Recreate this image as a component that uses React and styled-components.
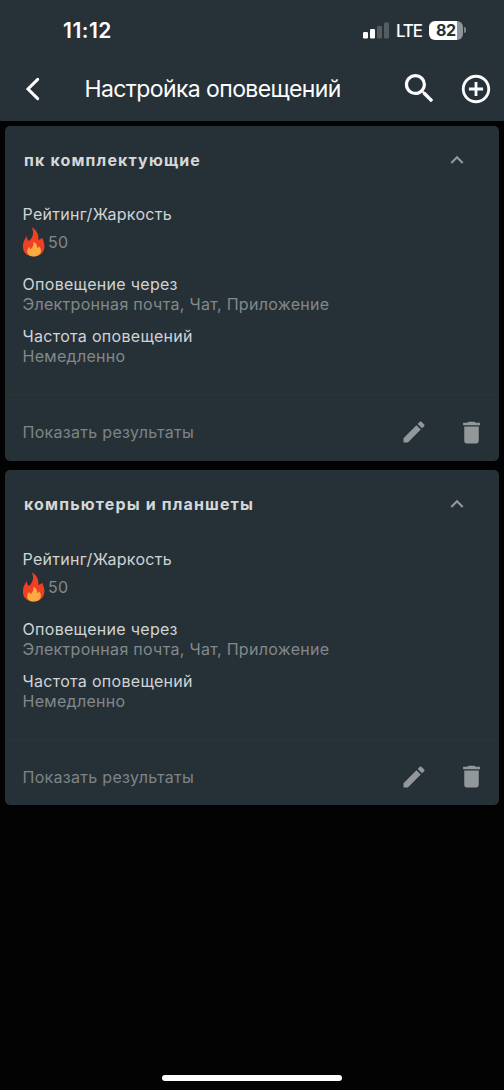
import React from 'react';
import styled, { createGlobalStyle } from 'styled-components';
import {
  MdSearch,
  MdAddCircleOutline,
  MdExpandLess,
  MdEdit,
  MdDelete
} from 'react-icons/md';

const GlobalStyle = createGlobalStyle`
  * {
    box-sizing: border-box;
  }

  body {
    margin: 0;
    background: #030303;
    font-family: Inter, 'Liberation Sans', sans-serif;
    -webkit-font-smoothing: antialiased;
  }
`;

const Screen = styled.div`
  display: flex;
  flex-direction: column;
  width: 504px;
  height: 1090px;
  overflow: hidden;
  background: #030303;
`;

const Header = styled.header`
  flex-shrink: 0;
  height: 121px;
  background: #273238;
  color: #fdfdfd;
`;

const StatusBar = styled.div`
  display: flex;
  align-items: center;
  height: 60px;
  padding: 0 38px 0 63px;
`;

const Time = styled.span`
  flex: 1;
  padding-top: 1px;
  font-size: 21px;
  font-weight: 600;
  line-height: 24px;
  letter-spacing: 0.5px;
`;

const Signal = styled.svg`
  display: block;
  margin-right: 7px;
`;

const Network = styled.span`
  width: 26px;
  margin-right: 7px;
  padding-top: 1px;
  font-size: 17px;
  font-weight: 500;
  line-height: 22px;
  letter-spacing: -1.2px;
  white-space: nowrap;
`;

const Battery = styled.div`
  width: 34px;
  height: 19px;
  border-radius: 6px;
  background: linear-gradient(to right, #fff 82%, #8f9598 82%);
  color: #273238;
  font-size: 16px;
  font-weight: 700;
  line-height: 19px;
  letter-spacing: -0.3px;
  padding-left: 7px;
`;

const BatteryTip = styled.div`
  width: 2px;
  height: 6px;
  margin-left: 1px;
  border-radius: 0 2px 2px 0;
  background: #7f868a;
`;

const NavBar = styled.nav`
  display: flex;
  align-items: center;
  height: 57px;
  padding: 0 11px 0 25px;
`;

const Title = styled.h1`
  flex: 1;
  margin: 0 0 0 43.5px;
  font-size: 23px;
  font-weight: 400;
  line-height: 30px;
  letter-spacing: -0.6px;
  white-space: nowrap;
`;

const IconButton = styled.button`
  display: flex;
  margin: 0 0 0 ${({ $gap }) => $gap || 0}px;
  padding: 0;
  border: none;
  background: none;
  color: inherit;
`;

const List = styled.main`
  display: flex;
  flex-direction: column;
  gap: 9.5px;
  padding: 5px 5px 0;
`;

const Card = styled.section`
  height: 334.9px;
  border-radius: 5px;
  background: #263137;
`;

const CardHeader = styled.div`
  display: flex;
  align-items: center;
  justify-content: space-between;
  height: 68px;
  padding: 0 29px 0 19px;
  color: #929799;
`;

const CardTitle = styled.h2`
  margin: 0;
  color: #d5d7d8;
  font-size: 16px;
  font-weight: 700;
  line-height: 20px;
  letter-spacing: 1.15px;
`;

const CardBody = styled.div`
  height: 200.4px;
  padding: 10.4px 17.5px 0;
`;

const Field = styled.div`
  margin-bottom: ${({ $space }) => $space || 0}px;
  font-size: 16px;
  line-height: 20px;
  letter-spacing: 0.3px;
`;

const Label = styled.div`
  color: #d1d3d4;
`;

const Value = styled.div`
  color: #82888b;
`;

const Rating = styled.div`
  display: flex;
  align-items: center;
  height: 36px;
  gap: 3.5px;
  color: #82888b;
`;

const CardFooter = styled.div`
  display: flex;
  align-items: center;
  height: 66px;
  padding: 9px 13px 0 17.5px;
  border-top: 1px solid #2a353a;
  color: #929799;
`;

const ResultsLink = styled.span`
  flex: 1;
  color: #7d8487;
  font-size: 16px;
  line-height: 20px;
  letter-spacing: 0.3px;
`;

const HomeIndicator = styled.div`
  width: 180px;
  height: 6px;
  margin: auto auto 9.5px;
  border-radius: 3px;
  background: #fff;
`;

const Flame = () => (
  <svg width="22" height="30" viewBox="0.5 0 22 30">
    <path
      fill="#ef4023"
      d="M9.400.4c4.400 2.300 7.200 6.400 6.300 12.300 2.100-.3 3-.6 4.100-1.900.9 3 2.300 5.500 2.100 9C21.500 25.700 17.500 29.500 11 29.500 4.500 29.500.4 25.600.4 19.600.4 15 2.200 12.300 4.300 9c0 2.300.7 3.900 2.100 4.900C10.400 10.500 11.900 6 9.400.4z"
    />
    <path
      fill="#fbab40"
      d="M10.800 14.800c3 1.500 4.200 3.700 3.700 6.300 1.100-.2 1.700-.8 2-1.800 1.800 2.200 2.300 4 1.700 5.900-.9 2.700-3.300 4.300-6.900 4.300-3.900 0-6.500-1.900-6.600-5.100 0-1.900.9-3.300 2.100-4.700.1 1.200.7 1.900 1.500 2.200 2.200-1.900 3-4.200 2.500-7.100z"
    />
  </svg>
);

const alerts = ['пк комплектующие', 'компьютеры и планшеты'];

const AlertCard = ({ name }) => (
  <Card>
    <CardHeader>
      <CardTitle>{name}</CardTitle>
      <IconButton>
        <MdExpandLess size={26} />
      </IconButton>
    </CardHeader>
    <CardBody>
      <Field $space={14}>
        <Label>Рейтинг/Жаркость</Label>
        <Rating>
          <Flame />
          <span>50</span>
        </Rating>
      </Field>
      <Field $space={12}>
        <Label>Оповещение через</Label>
        <Value>Электронная почта, Чат, Приложение</Value>
      </Field>
      <Field>
        <Label>Частота оповещений</Label>
        <Value>Немедленно</Value>
      </Field>
    </CardBody>
    <CardFooter>
      <ResultsLink>Показать результаты</ResultsLink>
      <IconButton>
        <MdEdit size={28} />
      </IconButton>
      <IconButton $gap={29}>
        <MdDelete size={29} />
      </IconButton>
    </CardFooter>
  </Card>
);

function App() {
  return (
    <Screen>
      <GlobalStyle />
      <Header>
        <StatusBar>
          <Time>11:12</Time>
          <Signal width="26" height="17" viewBox="0 0 26 17">
            <rect x="0" y="10" width="5" height="6.5" rx="1.3" fill="#fff" />
            <rect x="7" y="7" width="5" height="9.5" rx="1.3" fill="#fff" />
            <rect x="14" y="4" width="5" height="12.5" rx="1.3" fill="#535c61" />
            <rect x="21" y="0.5" width="5" height="16" rx="1.3" fill="#535c61" />
          </Signal>
          <Network>LTE</Network>
          <Battery>82</Battery>
          <BatteryTip />
        </StatusBar>
        <NavBar>
          <IconButton>
            <svg width="16" height="24" viewBox="0 0 16 24" fill="none">
              <path
                d="M12.700 2.400L3 12l9.700 9.600"
                stroke="#fff"
                strokeWidth="3"
                strokeLinecap="round"
                strokeLinejoin="miter"
              />
            </svg>
          </IconButton>
          <Title>Настройка оповещений</Title>
          <IconButton>
            <MdSearch size={39} />
          </IconButton>
          <IconButton $gap={20}>
            <MdAddCircleOutline size={34} />
          </IconButton>
        </NavBar>
      </Header>
      <List>
        {alerts.map(name => (
          <AlertCard name={name} key={name} />
        ))}
      </List>
      <HomeIndicator />
    </Screen>
  );
}

export default App;
